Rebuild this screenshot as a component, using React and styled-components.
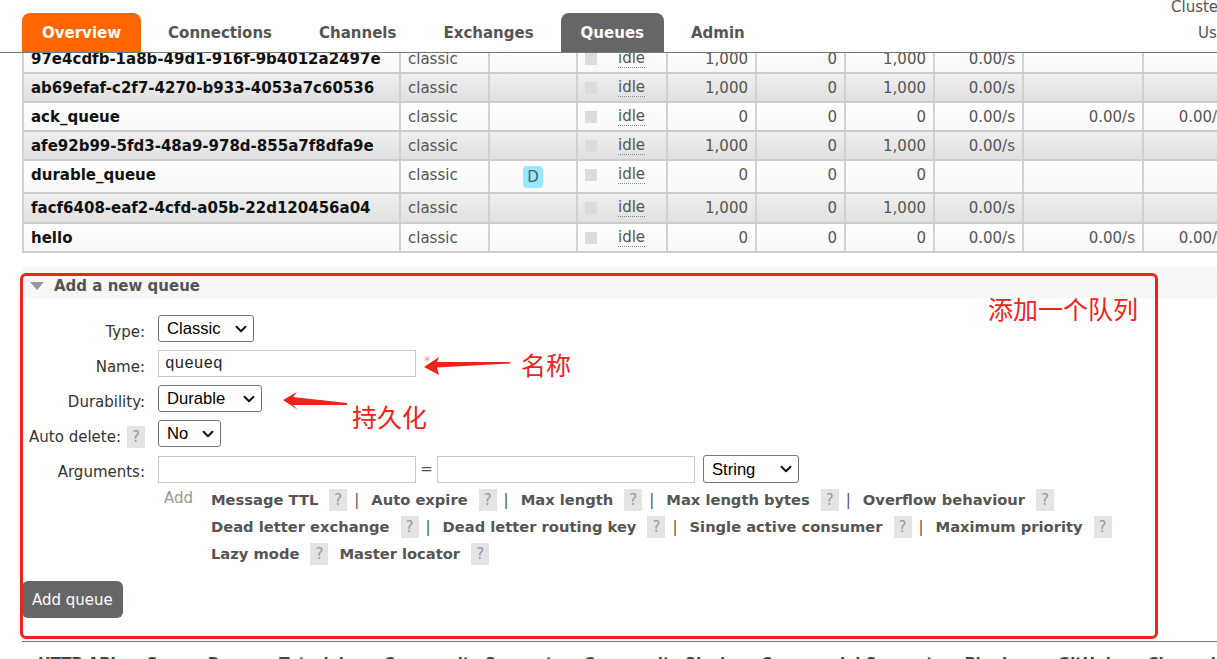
import React from "react";
import styled, { createGlobalStyle } from "styled-components";
import { ChevronDown } from "lucide-react";

const GlobalStyle = createGlobalStyle`
  html, body {
    margin: 0;
    padding: 0;
    background: #fff;
    overflow: hidden;
  }
  body {
    font-family: "DejaVu Sans", Verdana, sans-serif;
    font-size: 15px;
    color: #555;
  }
`;

const RED = "#f0231b";

const Page = styled.div`
  width: 1217px;
  height: 659px;
  overflow: hidden;
  display: flex;
  flex-direction: column;
`;

const Header = styled.header`
  display: flex;
  align-items: flex-end;
  height: 52px;
  flex-shrink: 0;
  padding-left: 22px;
  border-bottom: 1px solid #777;
`;

const Tabs = styled.nav`
  display: flex;
  gap: 7px;
`;

const Tab = styled.a`
  display: block;
  height: 39px;
  line-height: 40px;
  padding: 0 20px;
  border-radius: 8px 8px 0 0;
  font-weight: bold;
  text-decoration: none;
  color: ${(p) => (p.$bg ? "#fff" : "#555")};
  background: ${(p) => p.$bg || "transparent"};
`;

const Info = styled.div`
  margin-left: auto;
  width: 46px;
  align-self: stretch;
  white-space: nowrap;
  line-height: 14px;
  color: #555;
`;

const InfoLine = styled.div`
  padding-left: ${(p) => p.$indent || 0}px;
  margin-top: ${(p) => p.$top || 0}px;
`;

const Main = styled.main`
  display: flex;
  flex-direction: column;
  padding-left: 22px;
`;

const TableClip = styled.div`
  height: 200px;
  flex-shrink: 0;
  overflow: hidden;
  display: flex;
  flex-direction: column;
  justify-content: flex-end;
`;

const Table = styled.table`
  flex-shrink: 0;
  width: 1209px;
  table-layout: fixed;
  border-collapse: collapse;
  border-left: 2px solid #cfcfcf;
`;

const Col = styled.col`
  width: ${(p) => p.$w}px;
`;

const Row = styled.tr`
  background: ${(p) =>
    p.$alt
      ? "linear-gradient(#efefef, #e0e0e0)"
      : "linear-gradient(#ffffff, #f8f8f8)"};
`;

const Td = styled.td`
  padding: 5px 7px ${(p) => 4 + (p.$extra || 0)}px;
  line-height: 18px;
  vertical-align: top;
  white-space: nowrap;
  overflow: hidden;
  border-left: 2px solid #d2d2d2;
  border-bottom: 2px solid #cdcdcd;
  text-align: ${(p) => (p.$right ? "right" : "left")};
  color: ${(p) => (p.$name ? "#111" : "#555")};
  font-weight: ${(p) => (p.$name ? "bold" : "normal")};
`;

const Badge = styled.span`
  display: block;
  width: 20px;
  height: 22px;
  line-height: 22px;
  margin: 0 auto;
  border-radius: 4px;
  background: #97e9ff;
  color: #557;
  text-align: center;
`;

const StateWrap = styled.div`
  display: flex;
  align-items: center;
  gap: 21px;
`;

const Square = styled.span`
  width: 12px;
  height: 12px;
  background: #dcdcdc;
`;

const Idle = styled.span`
  line-height: 17px;
  border-bottom: 1px dotted #888;
`;

const SectionWrap = styled.section`
  position: relative;
  margin-top: 13px;
`;

const SectionHead = styled.h2`
  margin: 0;
  height: 32px;
  box-sizing: border-box;
  display: flex;
  align-items: center;
  gap: 10px;
  padding: 7px 0 0 8px;
  background: #f7f7f7;
  font-size: 15px;
  font-weight: bold;
  color: #555;
`;

const SectionBody = styled.div`
  padding-top: 17px;
`;

const FormGrid = styled.div`
  display: grid;
  grid-template-columns: 123px 1fr;
  column-gap: 13px;
  row-gap: 8px;
  align-items: center;
`;

const Label = styled.label`
  height: 27px;
  box-sizing: border-box;
  display: flex;
  justify-content: flex-end;
  align-items: center;
  gap: 6px;
  padding-top: 6px;
  color: #333;
`;

const Controls = styled.div`
  display: flex;
  align-items: center;
`;

const SelectBox = styled.div`
  position: relative;
  width: ${(p) => p.$w}px;
  height: ${(p) => p.$h || 27}px;
  margin-left: ${(p) => p.$ml || 0}px;
`;

const NativeSelect = styled.select`
  appearance: none;
  width: 100%;
  height: 100%;
  box-sizing: border-box;
  padding: 0 0 0 8px;
  border: 1px solid #767676;
  border-radius: 3px;
  background: #fff;
  font-family: "Liberation Sans", Arial, sans-serif;
  font-size: 16.6px;
  color: #000;
`;

const Chevron = styled(ChevronDown)`
  position: absolute;
  right: 4px;
  top: 50%;
  transform: translateY(-50%);
  pointer-events: none;
`;

const TextInput = styled.input`
  width: ${(p) => p.$w}px;
  height: 27px;
  box-sizing: border-box;
  padding: 0 6px;
  border: 1px solid #c8c8c8;
  font-family: "Liberation Mono", "Courier New", monospace;
  font-size: 16px;
  color: #222;
`;

const Required = styled.span`
  align-self: flex-start;
  margin: 3px 0 0 8px;
  font-size: 13px;
  color: #f59a9a;
`;

const Eq = styled.span`
  width: 21px;
  text-align: center;
  color: #555;
`;

const Help = styled.span`
  display: inline-block;
  flex-shrink: 0;
  width: 18px;
  height: 22px;
  line-height: 22px;
  margin-left: ${(p) => p.$ml ?? 11}px;
  text-align: center;
  background: #e4e4e4;
  color: #999;
  font-size: 15px;
  font-weight: normal;
`;

const AddRow = styled.div`
  grid-column: 2;
  display: flex;
  margin-top: -5px;
`;

const AddLabel = styled.span`
  width: 53px;
  padding-left: 6px;
  box-sizing: border-box;
  line-height: 24px;
  color: #999;
`;

const Lines = styled.div`
  display: flex;
  flex-direction: column;
`;

const LinkLine = styled.div`
  display: flex;
  align-items: center;
  height: 27px;
  white-space: nowrap;
`;

const ArgLink = styled.span`
  font-size: 14.7px;
  font-weight: bold;
  color: #555;
  margin-left: ${(p) => p.$ml || 0}px;
`;

const Sep = styled.span`
  margin: 0 12px 0 7px;
  color: #555;
`;

const AddButton = styled.button`
  align-self: flex-start;
  margin-top: 14px;
  height: 37px;
  padding: 0 10px;
  border: none;
  border-radius: 6px;
  background: #666;
  color: #fff;
  font-family: inherit;
  font-size: 15px;
`;

const Footer = styled.footer`
  margin-top: 23px;
  border-top: 1px solid #777;
  padding: 13px 0 0 16px;
  display: flex;
  gap: 31px;
  white-space: nowrap;
  font-weight: bold;
  color: #444;
`;

const Overlay = styled.div`
  position: absolute;
  inset: 0;
  pointer-events: none;
`;

const RedFrame = styled.div`
  position: absolute;
  left: -2px;
  top: 7px;
  width: 1138px;
  height: 366px;
  box-sizing: border-box;
  border: 3px solid ${RED};
  border-radius: 6px;
`;

const Note = styled.span`
  position: absolute;
  left: ${(p) => p.$x}px;
  top: ${(p) => p.$y}px;
  font-family: "Noto Sans CJK SC", sans-serif;
  font-size: 25px;
  line-height: 1;
  color: ${RED};
  white-space: nowrap;
`;

const Arrows = styled.svg`
  position: absolute;
  left: 0;
  top: 0;
  overflow: visible;
`;

const rows = [
  ["97e4cdfb-1a8b-49d1-916f-9b4012a2497e", "", "1,000", "0", "1,000", "0.00/s", "", ""],
  ["ab69efaf-c2f7-4270-b933-4053a7c60536", "", "1,000", "0", "1,000", "0.00/s", "", ""],
  ["ack_queue", "", "0", "0", "0", "0.00/s", "0.00/s", "0.00/s"],
  ["afe92b99-5fd3-48a9-978d-855a7f8dfa9e", "", "1,000", "0", "1,000", "0.00/s", "", ""],
  ["durable_queue", "D", "0", "0", "0", "", "", ""],
  ["facf6408-eaf2-4cfd-a05b-22d120456a04", "", "1,000", "0", "1,000", "0.00/s", "", "", 1],
  ["hello", "", "0", "0", "0", "0.00/s", "0.00/s", "0.00/s"],
];

const widths = [377, 89, 88, 90, 89, 89, 89, 89, 120, 89];

const tabs = [
  { label: "Overview", bg: "#ff6600" },
  { label: "Connections" },
  { label: "Channels" },
  { label: "Exchanges" },
  { label: "Queues", bg: "#666" },
  { label: "Admin" },
];

const argLines = [
  { items: ["Message TTL", "Auto expire", "Max length", "Max length bytes", "Overflow behaviour"], sep: true },
  { items: ["Dead letter exchange", "Dead letter routing key", "Single active consumer", "Maximum priority"], sep: true },
  { items: ["Lazy mode", "Master locator"], sep: false },
];

const footerLinks = [
  "HTTP API",
  "Server Docs",
  "Tutorials",
  "Community Support",
  "Community Slack",
  "Commercial Support",
  "Plugins",
  "GitHub",
  "Changelog",
];

const Select = ({ w, h, ml, value, options }) => (
  <SelectBox $w={w} $h={h} $ml={ml}>
    <NativeSelect defaultValue={value}>
      {options.map((o) => (
        <option key={o}>{o}</option>
      ))}
    </NativeSelect>
    <Chevron size={18} strokeWidth={2.6} color="#111" />
  </SelectBox>
);

const QueueRow = ({ data, alt }) => {
  const [name, feature, ready, unacked, total, incoming, deliver, ack, extra] = data;
  const cells = [ready, unacked, total, incoming, deliver, ack];
  return (
    <Row $alt={alt}>
      <Td $name $extra={extra}>{name}</Td>
      <Td $extra={extra}>classic</Td>
      <Td $extra={extra}>{feature && <Badge>{feature}</Badge>}</Td>
      <Td $extra={extra}>
        <StateWrap>
          <Square />
          <Idle>idle</Idle>
        </StateWrap>
      </Td>
      {cells.map((c, i) => (
        <Td key={i} $right $extra={extra}>
          {c}
        </Td>
      ))}
    </Row>
  );
};

export default function App() {
  return (
    <Page>
      <GlobalStyle />
      <Header>
        <Tabs>
          {tabs.map((t) => (
            <Tab key={t.label} $bg={t.bg}>
              {t.label}
            </Tab>
          ))}
        </Tabs>
        <Info>
          <InfoLine>Cluster rabbit@DESKTOP</InfoLine>
          <InfoLine $indent={27} $top={12}>
            User guest
          </InfoLine>
        </Info>
      </Header>

      <Main>
        <TableClip>
          <Table>
            <colgroup>
              {widths.map((w, i) => (
                <Col key={i} $w={w} />
              ))}
            </colgroup>
            <tbody>
              {rows.map((r, i) => (
                <QueueRow key={r[0]} data={r} alt={i % 2 === 1} />
              ))}
            </tbody>
          </Table>
        </TableClip>

        <SectionWrap>
          <SectionHead>
            <svg width="14" height="8" viewBox="0 0 14 8">
              <polygon points="0,0 14,0 7,8" fill="#999" />
            </svg>
            Add a new queue
          </SectionHead>
          <SectionBody>
            <FormGrid>
              <Label>Type:</Label>
              <Controls>
                <Select w={96} value="Classic" options={["Classic", "Quorum"]} />
              </Controls>

              <Label>Name:</Label>
              <Controls>
                <TextInput $w={258} defaultValue="queueq" />
                <Required>*</Required>
              </Controls>

              <Label>Durability:</Label>
              <Controls>
                <Select w={104} value="Durable" options={["Durable", "Transient"]} />
              </Controls>

              <Label>
                Auto delete:
                <Help $ml={0}>?</Help>
              </Label>
              <Controls>
                <Select w={63} value="No" options={["No", "Yes"]} />
              </Controls>

              <Label>Arguments:</Label>
              <Controls>
                <TextInput $w={258} />
                <Eq>=</Eq>
                <TextInput $w={258} />
                <Select w={96} h={28} ml={8} value="String" options={["String", "Number", "Boolean", "List"]} />
              </Controls>

              <AddRow>
                <AddLabel>Add</AddLabel>
                <Lines>
                  {argLines.map((line, li) => (
                    <LinkLine key={li}>
                      {line.items.map((item, i) => (
                        <React.Fragment key={item}>
                          <ArgLink $ml={!line.sep && i > 0 ? 11 : 0}>{item}</ArgLink>
                          <Help>?</Help>
                          {line.sep && i < line.items.length - 1 && <Sep>|</Sep>}
                        </React.Fragment>
                      ))}
                    </LinkLine>
                  ))}
                </Lines>
              </AddRow>
            </FormGrid>
            <AddButton>Add queue</AddButton>
          </SectionBody>

          <Overlay>
            <RedFrame />
            <Note $x={966} $y={30}>添加一个队列</Note>
            <Note $x={499} $y={86}>名称</Note>
            <Note $x={330} $y={138}>持久化</Note>
            <Arrows width="1160" height="380">
              <polygon
                points="402,101 417,91 415,96 488,96 488,97.5 415,101.5 417,109"
                fill={RED}
              />
              <polygon
                points="261,134 275,126 271,131 325,137 325,139 271,139 276,144"
                fill={RED}
              />
            </Arrows>
          </Overlay>
        </SectionWrap>

        <Footer>
          {footerLinks.map((l) => (
            <span key={l}>{l}</span>
          ))}
        </Footer>
      </Main>
    </Page>
  );
}
